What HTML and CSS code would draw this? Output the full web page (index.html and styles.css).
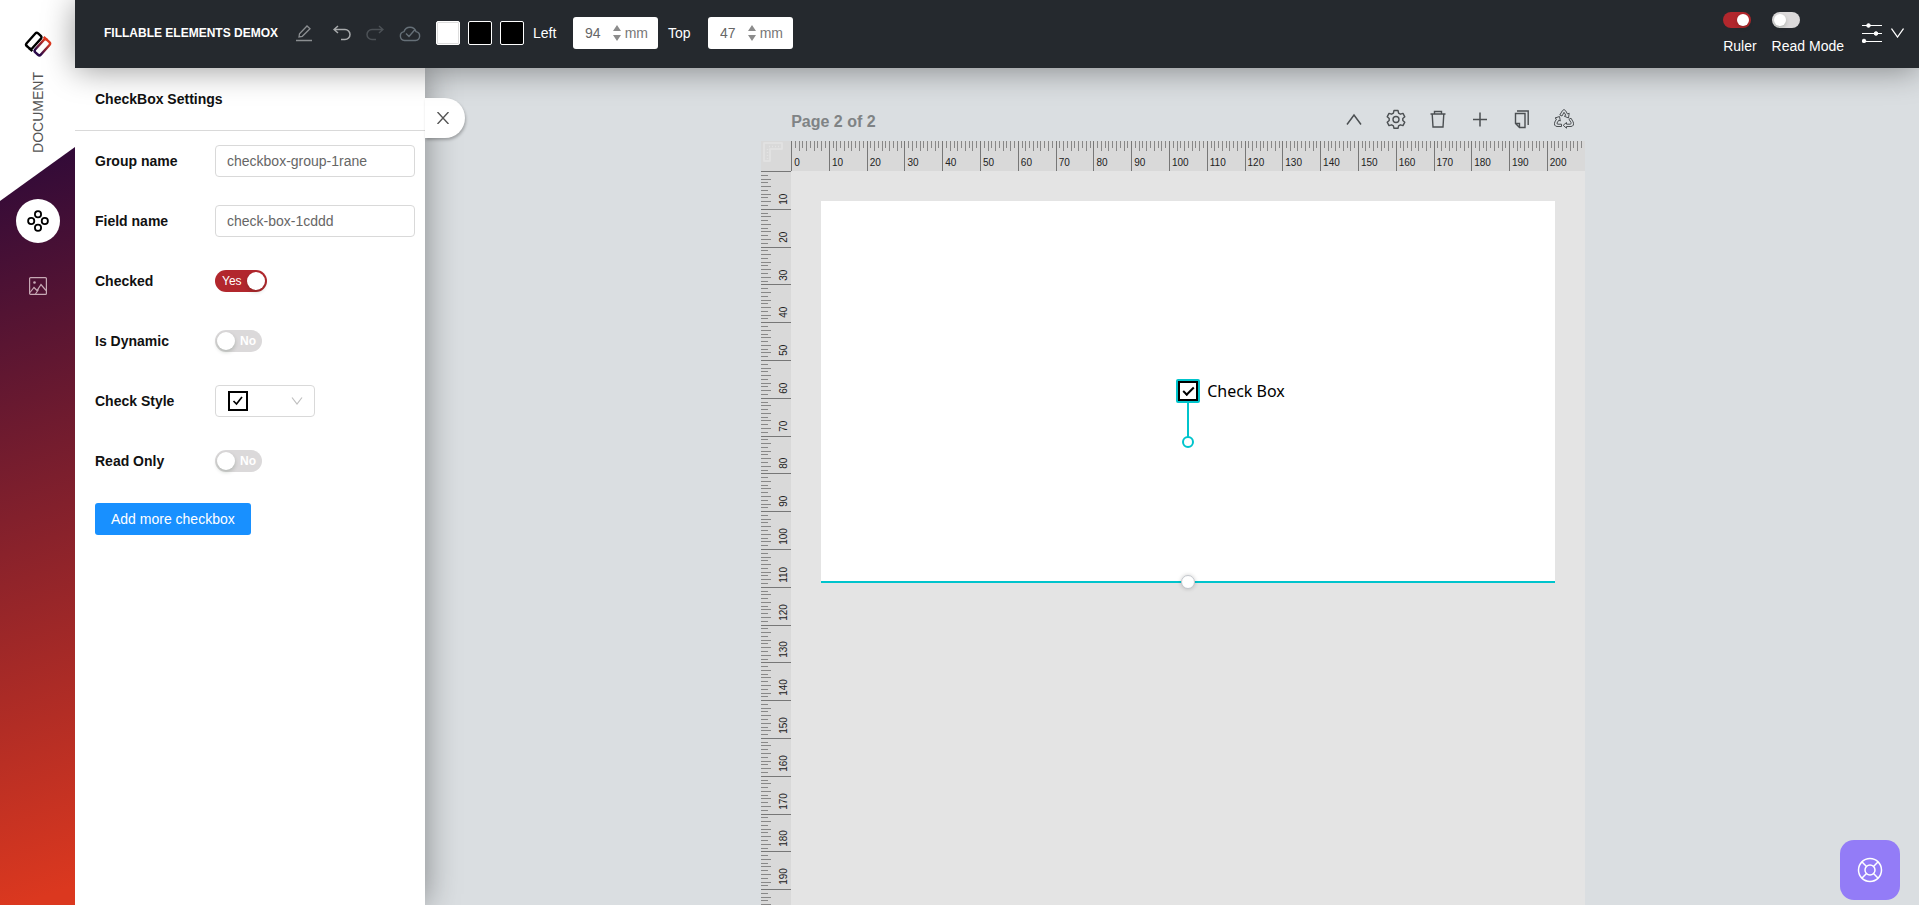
FILE: index.html
```html
<!DOCTYPE html>
<html lang="en">
  <head>
    <meta charset="UTF-8" />
    <meta name="viewport" content="width=device-width, initial-scale=1.0" />
    <title>Fillable Elements Demox</title>
    <link rel="stylesheet" href="styles.css">
  </head>
  <body>
    <aside class="sidebar">
      <div class="doc-tab">
        <svg class="logo" width="30" height="30" viewBox="0 0 30 30" fill="none" stroke-width="2.4">
          <defs>
            <linearGradient id="logoGradient" x1="-8" y1="0" x2="10" y2="0" gradientUnits="userSpaceOnUse">
              <stop offset="0.1" stop-color="#2b0a4a" />
              <stop offset="0.9" stop-color="#e03a20" />
            </linearGradient>
          </defs>
          <g transform="translate(15 15) rotate(-48)">
            <rect x="-9" y="-9" width="17" height="7.600" rx="2" stroke="#000" />
            <path d="M-9-4V0.500" stroke="#000" />
            <rect x="-8" y="1.600" width="17" height="7.600" rx="2" stroke="url(#logoGradient)" />
            <path d="M9 4V-0.500" stroke="#e03a20" />
          </g>
        </svg>
        <span class="doc-label">DOCUMENT</span>
      </div>
      <nav class="side-nav">
        <button class="side-button active" aria-label="Elements">
          <svg width="22" height="22" viewBox="0 0 22 22" fill="none" stroke="#000" stroke-width="1.800">
            <circle cx="11" cy="4.200" r="3.100" />
            <circle cx="4.200" cy="11" r="3.100" />
            <circle cx="17.800" cy="11" r="3.100" />
            <circle cx="11" cy="17.800" r="3.100" />
          </svg>
        </button>
        <button class="side-button" aria-label="Images">
          <svg width="18" height="18" viewBox="0 0 18 18" fill="none" stroke="#c7a9b5" stroke-width="1.200">
            <rect x="0.600" y="0.600" width="16.800" height="16.800" rx="1" />
            <circle cx="5.500" cy="5.500" r="1.300" fill="#c7a9b5" stroke="none" />
            <path d="M1 15.500 5 10.500 8 13.500 12 7.500 17 13.500M6.500 17 9.500 12.500" />
          </svg>
        </button>
      </nav>
    </aside>

    <div class="main">
      <header class="topbar">
        <h1 class="doc-title">FILLABLE ELEMENTS DEMOX</h1>
        <div class="history">
          <button class="icon-button" aria-label="Rename">
            <svg width="16" height="18" viewBox="0 0 16 18" fill="none" stroke="#8b8e91" stroke-width="1.300">
              <path d="M3 13 3.500 9.700 11 2 14 4.800 6.300 12.300ZM0 16.500H16" />
            </svg>
          </button>
          <button class="icon-button" aria-label="Undo">
            <svg width="18" height="18" viewBox="0 0 18 18" fill="none" stroke="#a9abad" stroke-width="1.500">
              <path d="M5 2 1 5.500 5 9M1 5.500H12A5 5 0 0 1 12 15.500H8" />
            </svg>
          </button>
          <button class="icon-button" aria-label="Redo">
            <svg width="18" height="18" viewBox="0 0 18 18" fill="none" stroke="#4c5156" stroke-width="1.500">
              <path d="M13 2 17 5.500 13 9M17 5.500H6A5 5 0 0 0 6 15.500H10" />
            </svg>
          </button>
          <button class="icon-button" aria-label="Saved">
            <svg width="22" height="18" viewBox="0 0 22 18" fill="none" stroke="#667078" stroke-width="1.400">
              <path d="M5.500 16.500A4.500 4.500 0 0 1 5 7.600A6.300 6.300 0 0 1 17 7.600A4.500 4.500 0 0 1 16.500 16.500ZM7 9.500 10 12.500 16 5.500" />
            </svg>
          </button>
        </div>
        <div class="swatches">
          <button class="swatch light" aria-label="Fill colour"></button>
          <button class="swatch" aria-label="Border colour"></button>
          <button class="swatch" aria-label="Text colour"></button>
        </div>
        <div class="position">
          <label for="posLeft">Left</label>
          <div class="number-box">
            <input id="posLeft" type="number" value="94" />
            <svg width="8" height="16" viewBox="0 0 8 16" fill="#8c8c8c"><path d="M4 0 8 6H0ZM0 10H8L4 16Z" /></svg>
            <span>mm</span>
          </div>
        </div>
        <div class="position">
          <label for="posTop">Top</label>
          <div class="number-box">
            <input id="posTop" type="number" value="47" />
            <svg width="8" height="16" viewBox="0 0 8 16" fill="#8c8c8c"><path d="M4 0 8 6H0ZM0 10H8L4 16Z" /></svg>
            <span>mm</span>
          </div>
        </div>
        <div class="view-options">
          <label class="view-switch">
            <input class="switch small" type="checkbox" checked />
            Ruler
          </label>
          <label class="view-switch">
            <input class="switch small" type="checkbox" />
            Read Mode
          </label>
          <button class="icon-button options-button" aria-label="Options">
            <svg width="20" height="20" viewBox="0 0 20 20" fill="#fff" stroke="#fff">
              <path d="M0 2.500H20M0 10.500H20M0 18.500H20" />
              <circle cx="6.500" cy="2.500" r="1.800" />
              <circle cx="14" cy="10.500" r="1.800" />
              <circle cx="2" cy="18" r="1.800" />
            </svg>
            <svg width="13" height="10" viewBox="0 0 13 10" fill="none" stroke="#fff" stroke-width="1.300"><path d="M0.500 0.500 6.500 9 12.500 0.500" /></svg>
          </button>
        </div>
      </header>

      <div class="content">
        <section class="panel">
          <h2 class="panel-title">CheckBox Settings</h2>
          <form class="settings">
            <div class="row">
              <label for="groupName">Group name</label>
              <input class="text-field" id="groupName" type="text" value="checkbox-group-1rane" />
            </div>
            <div class="row">
              <label for="fieldName">Field name</label>
              <input class="text-field" id="fieldName" type="text" value="check-box-1cddd" />
            </div>
            <div class="row">
              <label for="checked">Checked</label>
              <div class="switch-box on">
                <input class="switch" id="checked" type="checkbox" checked />
                <span>Yes</span>
              </div>
            </div>
            <div class="row">
              <label for="isDynamic">Is Dynamic</label>
              <div class="switch-box">
                <input class="switch" id="isDynamic" type="checkbox" />
                <span>No</span>
              </div>
            </div>
            <div class="row">
              <label for="checkStyle">Check Style</label>
              <div class="select-box">
                <select id="checkStyle">
                  <option value="tick" label=" "></option>
                </select>
                <svg class="select-value" width="20" height="20" viewBox="0 0 20 20" fill="none" stroke="#000">
                  <rect x="1" y="1" width="18" height="18" stroke-width="2" />
                  <path d="M5.500 10 8.500 13 14 6" stroke-width="1.700" />
                </svg>
                <svg class="select-arrow" width="12" height="8" viewBox="0 0 12 8" fill="none" stroke="#bfbfbf" stroke-width="1.200"><path d="M1 0.500 6 7 11 0.500" /></svg>
              </div>
            </div>
            <div class="row">
              <label for="readOnly">Read Only</label>
              <div class="switch-box">
                <input class="switch" id="readOnly" type="checkbox" />
                <span>No</span>
              </div>
            </div>
            <button class="add-button" type="button">Add more checkbox</button>
          </form>
          <button class="close-tab" aria-label="Close settings">
            <svg width="12" height="12" viewBox="0 0 12 12" stroke="#555" stroke-width="1.400"><path d="M0.500 0 11.500 12M11.500 0 0.500 12" /></svg>
          </button>
        </section>

        <main class="workspace">
          <div class="sheet">
            <div class="sheet-head">
              <h2>Page 2 of 2</h2>
              <div class="sheet-tools">
                <button class="icon-button" aria-label="Move up">
                  <svg width="20" height="20" viewBox="0 0 20 20" fill="none" stroke="#4b4f52" stroke-width="1.500"><path d="M3 15.500 10 6 17 15.500" /></svg>
                </button>
                <button class="icon-button" aria-label="Page settings">
                  <svg width="20" height="20" viewBox="0 0 20 20" fill="none" stroke="#4b4f52" stroke-width="1.400" stroke-linejoin="round">
                    <path d="M8 1.500H12L12.600 4.200 14.400 5.200 17 4.400 18.800 7.800 16.800 9.600V11.400L18.800 13.200 17 16.600 14.400 15.800 12.600 16.800 12 19.300H8L7.400 16.800 5.600 15.800 3 16.600 1.200 13.200 3.200 11.400V9.600L1.200 7.800 3 4.400 5.600 5.200 7.400 4.200Z" />
                    <circle cx="10" cy="10.500" r="3" />
                  </svg>
                </button>
                <button class="icon-button" aria-label="Delete page">
                  <svg width="20" height="20" viewBox="0 0 20 20" fill="none" stroke="#4b4f52" stroke-width="1.400"><path d="M2.500 5H17.500M4.200 5 5 18H15L15.800 5M6.500 5V2.500H13.500V5" /></svg>
                </button>
                <button class="icon-button" aria-label="Add page">
                  <svg width="20" height="20" viewBox="0 0 20 20" fill="none" stroke="#4b4f52" stroke-width="1.500"><path d="M10 3.500V17.500M3 10.500H17" /></svg>
                </button>
                <button class="icon-button" aria-label="Copy page">
                  <svg width="20" height="20" viewBox="0 0 20 20" fill="none" stroke="#4b4f52" stroke-width="1.400"><path d="M3.500 4.500H13V18.500H7.500L3.500 14.500ZM3.500 14.500H7.500V18.500M5 2H16.200V16" /></svg>
                </button>
                <button class="icon-button" aria-label="Recycle">
                  <svg width="20" height="20" viewBox="0 0 20 20" fill="none" stroke="#4b4f52" stroke-linejoin="round">
                    <path d="M5.800 6 8.300 1.800Q10-0.800 11.700 1.800L13.500 5 15.200 4.200 14.500 9 10.300 7.200 11.800 6.200 10 3.300 8 7Z" />
                    <path d="M15 10.300 17 9.200 19.200 13Q20.500 17 17 17.500H12.500V19.200L9.200 16.300 12.500 13.500V15.200H16.200Q17.500 15 17 13.500Z" />
                    <path d="M7.500 17.500H3Q-0.500 17 0.800 13L2.500 10 1 9 5.500 7.500 6.300 12 4.800 11.200 3 14Q2.800 15.200 4 15.200H7.500Z" />
                  </svg>
                </button>
              </div>
            </div>
            <div class="ruler-corner">
              <svg width="20" height="20" viewBox="0 0 20 20" fill="none" stroke="#e3e3e3" stroke-width="1.500"><path d="M1 1H19V7H7V19H1Z" /><path d="M6 4.500H17M4.500 7V17" stroke-dasharray="1 2" /></svg>
            </div>
            <div class="ruler ruler-x" id="rulerX"></div>
            <div class="ruler ruler-y" id="rulerY"></div>
            <div class="canvas">
              <div class="paper">
                <label class="element">
                  <input class="element-check" type="checkbox" checked />
                  Check Box
                </label>
                <span class="rotate-handle"></span>
                <span class="resize-handle"></span>
              </div>
            </div>
          </div>
        </main>
      </div>
    </div>

    <button class="help-button" aria-label="Help">
      <svg width="26" height="26" viewBox="0 0 26 26" fill="none" stroke="#fff" stroke-width="1.500">
        <circle cx="13" cy="13" r="11.500" />
        <circle cx="13" cy="13" r="5" />
        <path d="M4.800 4.800 9.500 9.500M21.200 4.800 16.500 9.500M4.800 21.200 9.500 16.500M21.200 21.200 16.500 16.500" />
      </svg>
    </button>

    <script>
      // one label per centimetre, values in mm
      const addLabels = (id, from, to) => {
        const ruler = document.getElementById(id);
        for (let mm = from; mm <= to; mm += 10) {
          const label = document.createElement("span");
          label.textContent = mm;
          ruler.appendChild(label);
        }
      };

      addLabels("rulerX", 0, 200);
      addLabels("rulerY", 10, 190);
    </script>
  </body>
</html>
```
FILE: styles.css
```css
*,
*::before,
*::after {
  box-sizing: border-box;
}
body {
  display: flex;
  height: 100vh;
  margin: 0;
  overflow: hidden;
  font-family: "Liberation Sans", Arial, sans-serif;
  font-size: 14px;
  color: #111;
  background-color: #dadee1;
}
button {
  padding: 0;
  border: none;
  background: none;
  font-family: inherit;
  cursor: pointer;
}
input,
select {
  margin: 0;
  font-family: inherit;
  font-size: 14px;
}
svg {
  display: block;
}

/* Sidebar */
.sidebar {
  position: relative;
  z-index: 2;
  flex: none;
  width: 75px;
  background: linear-gradient(162deg, #310a38 18%, #db381f 98%);
}
.doc-tab {
  display: flex;
  flex-direction: column;
  align-items: center;
  gap: 13px;
  height: 201px;
  padding-top: 29px;
  background-color: #fff;
  clip-path: polygon(0 0, 100% 0, 100% 147px, 0 100%);
}
.doc-label {
  writing-mode: vertical-rl;
  transform: rotate(180deg);
  color: #555;
}
.side-nav {
  display: flex;
  flex-direction: column;
  align-items: center;
  gap: 21px;
}
.side-button {
  display: flex;
  align-items: center;
  justify-content: center;
  width: 44px;
  height: 44px;
  border-radius: 50%;
}
.side-button.active {
  margin-top: -2px;
  background-color: #fff;
}

/* Top bar */
.main {
  flex: 1;
  display: flex;
  flex-direction: column;
  min-width: 0;
}
.topbar {
  position: relative;
  z-index: 3;
  display: flex;
  align-items: center;
  height: 68px;
  padding: 0 15px 2px 29px;
  color: #fff;
  background-color: #25292e;
  box-shadow: 0 2px 32px rgba(0, 0, 0, 0.4);
}
.doc-title {
  margin: 0;
  font-size: 12px;
}
.icon-button {
  display: flex;
  align-items: center;
}
.history {
  display: flex;
  gap: 15px;
  margin-left: 18px;
}
.history .icon-button:first-child {
  margin-right: 6px;
}
.swatches {
  display: flex;
  gap: 8px;
  margin: 0 9px 0 15px;
}
.swatch {
  width: 24px;
  height: 24px;
  border: 1px solid #fff;
  border-radius: 2px;
  background-color: #000;
}
.swatch.light {
  background-color: #fff;
  box-shadow: inset 0 0 0 1px #ddd;
}
.position {
  display: flex;
  align-items: center;
  margin-right: 10px;
}
.position label {
  width: 40px;
}
.number-box {
  display: flex;
  align-items: center;
  width: 85px;
  height: 32px;
  padding: 0 10px 0 12px;
  border-radius: 3px;
  color: #777;
  background-color: #fff;
}
.number-box input {
  flex: 1;
  min-width: 0;
  padding: 0;
  border: none;
  color: #666;
  background: none;
  appearance: textfield;
}
.number-box input::-webkit-inner-spin-button {
  appearance: none;
}
.number-box span {
  margin-left: 4px;
}
.view-options {
  display: flex;
  align-items: center;
  gap: 15px;
  margin-left: auto;
}
.view-switch {
  display: flex;
  flex-direction: column;
  gap: 10px;
}
.options-button {
  gap: 9px;
  margin-left: 3px;
}

/* Switches */
.switch {
  display: flex;
  width: 47px;
  height: 22px;
  padding: 2px;
  border-radius: 11px;
  background-color: #dbd9da;
  appearance: none;
  cursor: pointer;
}
.switch::before {
  content: "";
  width: 18px;
  height: 18px;
  border-radius: 50%;
  background-color: #fff;
  box-shadow: 0 2px 4px rgba(0, 35, 11, 0.2);
}
.switch:checked {
  justify-content: flex-end;
  background-color: #b2272d;
}
.switch.small {
  width: 28px;
  height: 16px;
}
.switch.small::before {
  width: 12px;
  height: 12px;
}
.switch-box {
  display: grid;
  align-items: center;
}
.switch-box > * {
  grid-area: 1 / 1;
}
.switch-box span {
  justify-self: end;
  padding-right: 6px;
  font-size: 12px;
  font-weight: bold;
  color: #fff;
  pointer-events: none;
}
.switch-box.on .switch {
  width: 52px;
}
.switch-box.on span {
  justify-self: start;
  padding: 0 0 0 7px;
  font-weight: normal;
}

/* Settings panel */
.content {
  flex: 1;
  display: flex;
  min-height: 0;
}
.panel {
  position: relative;
  z-index: 1;
  flex: none;
  width: 350px;
  background-color: #fff;
  box-shadow: 0 0 32px rgba(0, 0, 0, 0.4);
}
.panel-title {
  margin: 0;
  padding: 0 20px;
  border-bottom: 1px solid #d9d9d9;
  font-size: 14px;
  line-height: 62px;
}
.settings {
  padding: 0 10px 0 20px;
}
.row {
  display: flex;
  align-items: center;
  height: 60px;
}
.row > label {
  width: 120px;
  font-weight: bold;
}
.text-field {
  flex: 1;
  min-width: 0;
  height: 32px;
  padding: 0 11px;
  border: 1px solid #d9d9d9;
  border-radius: 4px;
  color: #666;
}
.select-box {
  display: grid;
  align-items: center;
  width: 100px;
}
.select-box > * {
  grid-area: 1 / 1;
}
.select-box select {
  height: 32px;
  border: 1px solid #d9d9d9;
  border-radius: 4px;
  background-color: #fff;
  appearance: none;
}
.select-box svg {
  pointer-events: none;
}
.select-value {
  margin-left: 13px;
}
.select-arrow {
  justify-self: end;
  margin-right: 12px;
}
.add-button {
  height: 32px;
  margin-top: 12px;
  padding: 0 16px;
  border-radius: 3px;
  font-size: 14px;
  color: #fff;
  background-color: #1890ff;
}
.close-tab {
  position: absolute;
  top: 30px;
  left: 100%;
  display: flex;
  align-items: center;
  width: 40px;
  height: 40px;
  padding-left: 12px;
  border-radius: 0 20px 20px 0;
  background-color: #fff;
  box-shadow: 1px 2px 3px rgba(0, 0, 0, 0.25);
}

/* Page and rulers */
.workspace {
  flex: 1;
  display: flex;
  justify-content: center;
  min-width: 0;
  padding-left: 2px;
  overflow: hidden;
}
.sheet {
  display: grid;
  grid-template-columns: 30px 210mm;
  grid-template-rows: 73px 30px 1fr;
  min-height: 0;
}
.sheet-head {
  grid-column: 2;
  display: flex;
  align-items: center;
  justify-content: space-between;
  padding: 34px 11px 0 0;
}
.sheet-head h2 {
  margin: 0;
  font-size: 16px;
  color: #7f8385;
}
.sheet-tools {
  display: flex;
  gap: 22px;
  padding-bottom: 6px;
}
.ruler-corner {
  padding: 1px 2px;
  background-color: #d9d9d9;
}
.ruler {
  --dir: to right;
  display: flex;
  overflow: hidden;
  font-size: 10px;
  line-height: 10px;
  color: #222;
  background-color: #d9d9d9;
  background-image:
    repeating-linear-gradient(var(--dir), #777 0 1px, transparent 1px 10mm),
    repeating-linear-gradient(var(--dir), #888 0 1px, transparent 1px 2mm),
    repeating-linear-gradient(var(--dir), #888 0 1px, transparent 1px 1mm);
  background-repeat: no-repeat;
}
.ruler span {
  flex: none;
}
.ruler-x {
  background-size: 100% 100%, 100% 10px, 100% 7px;
}
.ruler-x span {
  width: 10mm;
  padding: 17px 0 0 3px;
}
.ruler-y {
  --dir: to bottom;
  flex-direction: column;
  min-height: 0;
  background-size: 100% 100%, 10px 100%, 7px 100%;
}
.ruler-y span {
  width: 30px;
  height: 10mm;
  padding: 4px 18px 0 0;
  writing-mode: vertical-rl;
  transform: rotate(180deg);
}
.canvas {
  padding: 30px 30px 0;
  background-color: #e4e4e4;
}
.paper {
  position: relative;
  height: 382px;
  border-bottom: 2px solid #00c4cc;
  background-color: #fff;
}
.element {
  position: absolute;
  top: 178px;
  left: 355px;
  display: flex;
  align-items: center;
  gap: 7px;
  font-family: "Noto Sans", "Open Sans", sans-serif;
  font-size: 16px;
  line-height: 24px;
  color: #000;
}
.element-check {
  display: flex;
  align-items: center;
  justify-content: center;
  width: 24px;
  height: 24px;
  border: 2px solid #00c4cc;
  border-radius: 2px;
  background-color: #fff;
  box-shadow: inset 0 0 0 2px #000;
  appearance: none;
}
.element-check:checked::before {
  content: "";
  width: 11px;
  height: 6px;
  margin-top: -3px;
  border-bottom: 2px solid #000;
  border-left: 2px solid #000;
  transform: rotate(-45deg);
}
.rotate-handle {
  position: absolute;
  top: 202px;
  left: 366px;
  width: 2px;
  height: 34px;
  background-color: #00c4cc;
}
.rotate-handle::after {
  content: "";
  position: absolute;
  top: 100%;
  left: -5px;
  width: 12px;
  height: 12px;
  margin-top: -1px;
  border: 2px solid #00c4cc;
  border-radius: 50%;
  background-color: #fff;
}
.resize-handle {
  position: absolute;
  bottom: -8px;
  left: 50%;
  width: 14px;
  height: 14px;
  border: 1px solid #c3c7cd;
  border-radius: 50%;
  background-color: #fff;
  box-shadow: 0 0 4px rgba(0, 0, 0, 0.2);
  transform: translateX(-50%);
}

.help-button {
  position: fixed;
  right: 19px;
  bottom: 5px;
  z-index: 3;
  display: flex;
  align-items: center;
  justify-content: center;
  width: 60px;
  height: 60px;
  border-radius: 14px;
  background-color: #937cf7;
}
```
